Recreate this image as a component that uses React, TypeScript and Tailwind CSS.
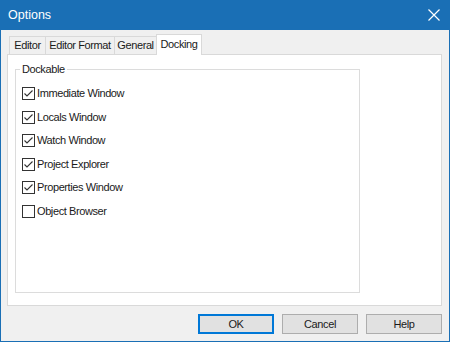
const font = { fontFamily: '"Liberation Sans", Arial, sans-serif' };

const tabs = [
    { label: "Editor", w: "w-[37px]" },
    { label: "Editor Format", w: "w-[70px]" },
    { label: "General", w: "w-[43px]" },
];

const items = [
    { label: "Immediate Window", checked: true },
    { label: "Locals Window", checked: true },
    { label: "Watch Window", checked: true },
    { label: "Project Explorer", checked: true },
    { label: "Properties Window", checked: true },
    { label: "Object Browser", checked: false },
];

function CheckBox({ checked }: { checked: boolean }) {
    return (
        <span className="w-[13px] h-[13px] border border-[#333333] bg-white flex items-center justify-center shrink-0">
            {checked && (
                <svg width="11" height="11" viewBox="0 0 11 11">
                    <path d="M1.5 5.5 L4 8 L9.5 2.5" fill="none" stroke="#333333" strokeWidth="1.1" />
                </svg>
            )}
        </span>
    );
}

export default function App() {
    return (
        <div
            className="w-[450px] h-[342px] bg-[#1a6fb5] flex flex-col text-[11px] tracking-[-0.4px] text-[#1a1a1a]"
            style={font}
        >
            <div className="h-[30px] flex items-center justify-between pl-[8px] pr-[10px] shrink-0">
                <span className="text-white text-[12.5px] tracking-normal">Options</span>
                <svg width="12" height="12" viewBox="0 0 12 12">
                    <path d="M0.5 0.5 L11.5 11.5 M11.5 0.5 L0.5 11.5" stroke="white" strokeWidth="1.2" />
                </svg>
            </div>

            <div className="flex-1 mx-[1px] mb-[1px] bg-[#f0f0f0] flex flex-col pt-[4px] pl-[6px] pr-[7px] pb-[7px]">
                <div className="flex items-end h-[20px] pl-[2px] relative z-10">
                    {tabs.map((t) => (
                        <div
                            key={t.label}
                            className={`${t.w} h-[18px] border border-b-0 border-[#d9d9d9] -ml-px first:ml-0 flex items-center justify-center leading-none bg-[#f0f0f0]`}
                        >
                            {t.label}
                        </div>
                    ))}
                    <div className="w-[46px] h-[21px] -ml-px border border-b-0 border-[#d9d9d9] bg-white flex items-center justify-center leading-none -mb-px pb-[2px]">
                        Docking
                    </div>
                </div>

                <div className="h-[252px] border border-[#d9d9d9] bg-white pl-[7px] pt-[14px] pr-[81px] pb-[12px]">
                    <div className="relative h-full border border-[#dcdcdc]">
                        <span className="absolute -top-[9px] left-[4px] bg-white px-[2px] leading-[16px]">
                            Dockable
                        </span>
                        <div className="flex flex-col pt-[12px] pl-[6px]">
                            {items.map((it) => (
                                <div key={it.label} className="h-[23.5px] flex items-center gap-[2px]">
                                    <CheckBox checked={it.checked} />
                                    <span className="leading-none">{it.label}</span>
                                </div>
                            ))}
                        </div>
                    </div>
                </div>

                <div className="flex justify-end gap-[8px] mt-[8px]">
                    <button className="w-[76px] h-[20px] border-2 border-[#0078d7] bg-[#e1e1e1] leading-none">
                        OK
                    </button>
                    <button className="w-[76px] h-[20px] border border-[#adadad] bg-[#e1e1e1] leading-none">
                        Cancel
                    </button>
                    <button className="w-[76px] h-[20px] border border-[#adadad] bg-[#e1e1e1] leading-none">
                        Help
                    </button>
                </div>
            </div>
        </div>
    );
}
